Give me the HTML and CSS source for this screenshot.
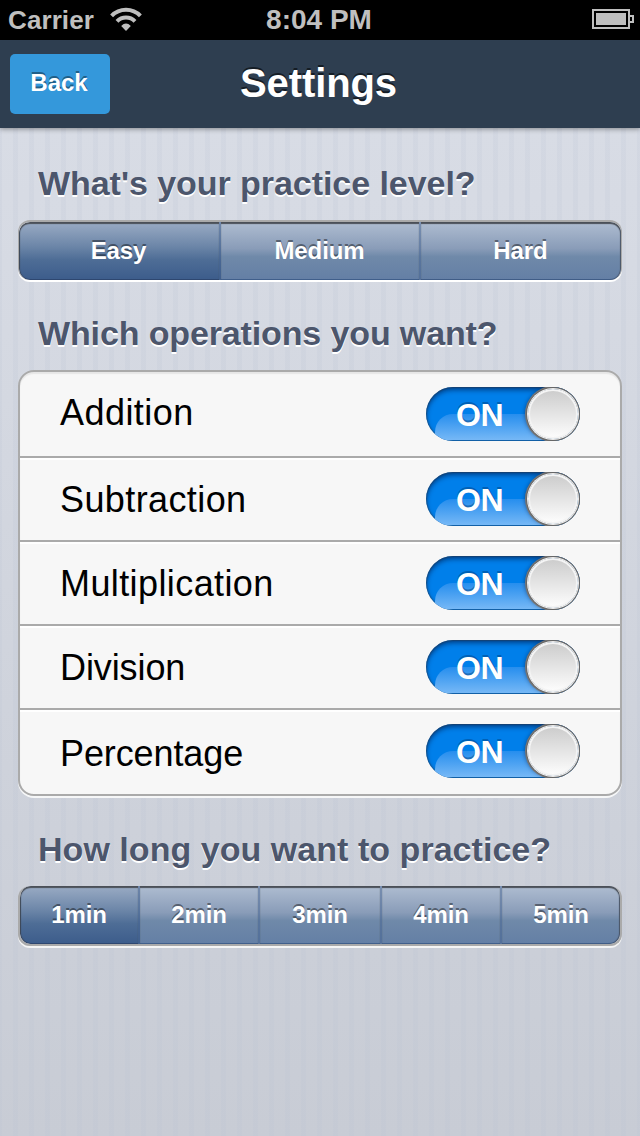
FILE: index.html
```
<!DOCTYPE html>
<html lang="en">
<head>
<meta charset="utf-8">
<title>Settings</title>
<link rel="stylesheet" href="styles.css">
</head>
<body>
<header class="status">
  <div class="status-left"><span class="carrier">Carrier</span>
    <svg class="wifi" width="32" height="24" viewBox="0 0 32 24"><g fill="none" stroke="#bfbfbf" stroke-width="4"><path d="M1.6 8.8A20 20 0 0 1 30.4 8.8"/><path d="M7 14.4A12.5 12.5 0 0 1 25 14.4"/></g><path d="M11.2 19Q16 14.2 20.8 19L16 24Z" fill="#bfbfbf"/></svg>
  </div>
  <span class="clock">8:04 PM</span>
  <svg class="battery" width="42" height="20" viewBox="0 0 42 20"><path d="M1 1H37V19H1ZM38 7H41V13H38" fill="none" stroke="#bfbfbf" stroke-width="2"/><path d="M4 4H34V16H4Z" fill="#bfbfbf"/></svg>
</header>
<nav class="navbar"><button class="back">Back</button><h1 class="title">Settings</h1></nav>
<main class="content">
  <h2 class="heading">What's your practice level?</h2>
  <div class="segments level">
    <button class="segment selected">Easy</button><button class="segment">Medium</button><button class="segment">Hard</button>
  </div>
  <h2 class="heading operations">Which operations you want?</h2>
  <ul class="panel">
    <li class="row"><span class="label">Addition</span><span class="switch"><span class="on">ON</span><i class="knob"></i></span></li>
    <li class="row"><span class="label">Subtraction</span><span class="switch"><span class="on">ON</span><i class="knob"></i></span></li>
    <li class="row"><span class="label">Multiplication</span><span class="switch"><span class="on">ON</span><i class="knob"></i></span></li>
    <li class="row"><span class="label tight">Division</span><span class="switch"><span class="on">ON</span><i class="knob"></i></span></li>
    <li class="row"><span class="label tight">Percentage</span><span class="switch"><span class="on">ON</span><i class="knob"></i></span></li>
  </ul>
  <h2 class="heading time">How long you want to practice?</h2>
  <div class="segments duration">
    <button class="segment selected">1min</button><button class="segment">2min</button><button class="segment">3min</button><button class="segment">4min</button><button class="segment">5min</button>
  </div>
</main>
</body>
</html>
```
FILE: styles.css
```
* { box-sizing: border-box; }
body {
  margin: 0;
  min-height: 1136px;
  display: flex;
  flex-direction: column;
  font-family: "Liberation Sans", Arial, sans-serif;
  background:
    repeating-linear-gradient(90deg, rgba(184, 193, 210, .17) 0 2px, transparent 2px 13px, rgba(184, 193, 210, .17) 13px 16px),
    linear-gradient(#d8dce5 128px, #d4d8e1 400px, #c8ccd5 1136px);
}
button { border: 0; padding: 0; font: bold 24px "Liberation Sans", Arial, sans-serif; color: #fff; }
.status {
  height: 40px;
  display: grid;
  grid-template-columns: 1fr auto 1fr;
  align-items: center;
  padding: 0 6px 0 8px;
  background: #000;
  color: #bfbfbf;
  font-weight: bold;
}
.status-left { display: flex; align-items: center; gap: 16px; }
.carrier { font-size: 26px; line-height: 40px; letter-spacing: .1px; }
.wifi { margin-top: -2px; }
.clock { font-size: 28px; line-height: 38px; margin-left: -4px; }
.battery { justify-self: end; margin-top: -2px; }
.navbar {
  height: 88px;
  display: grid;
  grid-template-columns: 100px 1fr 100px;
  align-items: center;
  padding: 0 10px;
  background: #2e3e50;
  box-shadow: 0 1px 5px rgba(0, 0, 0, .4);
}
.back { height: 60px; padding: 0 2px 3px 0; border-radius: 5px; background: #3498db; text-shadow: 0 -2px 0 rgba(0, 0, 0, .4); }
.title { margin: 0 3px 0 0; font-size: 40px; line-height: 84px; padding-bottom: 2px; letter-spacing: -.1px; text-align: center; color: #fff; text-shadow: 0 -2px 0 rgba(0, 0, 0, .55); }
.content { padding: 32px 18px 0; }
.heading { margin: 0 20px; font-size: 34px; line-height: 46px; height: 60px; letter-spacing: -.05px; color: #4c566c; text-shadow: 0 2px 0 #fff; white-space: nowrap; }
.operations { letter-spacing: -.13px; }
.time { letter-spacing: .04px; }
.segments { display: grid; height: 60px; border-radius: 12px; overflow: hidden; }
.level { grid-template-columns: 202px 200px 200px; margin-bottom: 30px; border: solid #aaa; border-width: 2px 1px 0; box-shadow: 0 2px 0 #fff; }
.duration { grid-template-columns: 120px 120px 122px 120px 118px; border: solid #aaa; border-width: 0 2px 2px; box-shadow: 0 2px 0 #f5f5f5; }
.segment {
  letter-spacing: -.1px;
  background: linear-gradient(#afbdd1, #899cb8 46%, #6f89a9 60%, #647fa5);
  border-right: 2px solid rgba(67, 97, 144, .5);
  text-shadow: 0 -2px 0 rgba(0, 0, 0, .42);
  box-shadow: inset 0 2px 1px #4b5058, inset 0 -1px 0 #405f8b;
}
.level .segment { padding: 0 1px 1px 0; }
.duration .segment { padding-bottom: 0; }
.segment:last-child { border-right: 0; border-radius: 0 11px 11px 0; box-shadow: inset 0 2px 1px #4b5058, inset -1px 0 1px #4b5668, inset 0 -1px 0 #405f8b; }
.segment.selected { background: linear-gradient(#9aabc4, #6c86a8 42%, #4e6d96 65%, #3c5c8b); border-radius: 11px 0 0 11px; box-shadow: inset 0 2px 1px #4b5058, inset 1px 0 1px #3c4656, inset 0 -1px 0 #2d4774; }
.panel {
  list-style: none;
  margin: 0 0 30px;
  padding: 0;
  height: 426px;
  border: 2px solid #aaa;
  border-radius: 16px;
  background: #f7f7f7;
  box-shadow: 0 2px 0 #f6f7f8, inset 0 2px 1px #e6e6e6;
}
.row { height: 84px; display: flex; align-items: center; justify-content: space-between; padding: 0 40px; border-bottom: 2px solid #aaa; box-shadow: inset 0 2px 0 #fff; }
.row:first-child { height: 86px; box-shadow: none; }
.row:last-child { border-bottom: 0; padding-bottom: 2px; }
.label { font-size: 36px; letter-spacing: .4px; color: #000; line-height: 80px; padding-top: 2px; }
.row:first-child .label { padding: 0 0 2px; letter-spacing: .45px; }
.row:last-child .label { line-height: 78px; padding-top: 6px; }
.label.tight { letter-spacing: -.1px; }
.switch {
  width: 154px;
  height: 54px;
  display: flex;
  align-items: center;
  justify-content: space-between;
  padding: 0 2px 0 30px;
  border-radius: 27px;
  background: #007fea;
  box-shadow: inset 0 0 1px 1px rgba(50, 55, 65, .4), inset 0 3px 5px rgba(0, 30, 80, .65);
  position: relative;
  overflow: hidden;
}
.switch::before { content: ""; position: absolute; left: 9px; right: 20px; top: 27px; bottom: 1px; border-radius: 18px 0 0 0; background: linear-gradient(#268eee, #76b8f6); }
.on { position: relative; font-size: 32px; line-height: 36px; padding-top: 1px; font-weight: bold; letter-spacing: -.3px; color: #fff; text-shadow: 0 -2px 0 rgba(0, 65, 130, .5); }
.knob { position: relative; width: 50px; height: 50px; border-radius: 50%; background: linear-gradient(#cdcdcd, #fcfcfc); border: 2px solid #f4f4f4; box-shadow: 0 0 0 1px #eee, 0 0 0 2px #666, 0 0 0 3px #777, -2px 0 4px 1px rgba(0, 20, 60, .5); }
```
